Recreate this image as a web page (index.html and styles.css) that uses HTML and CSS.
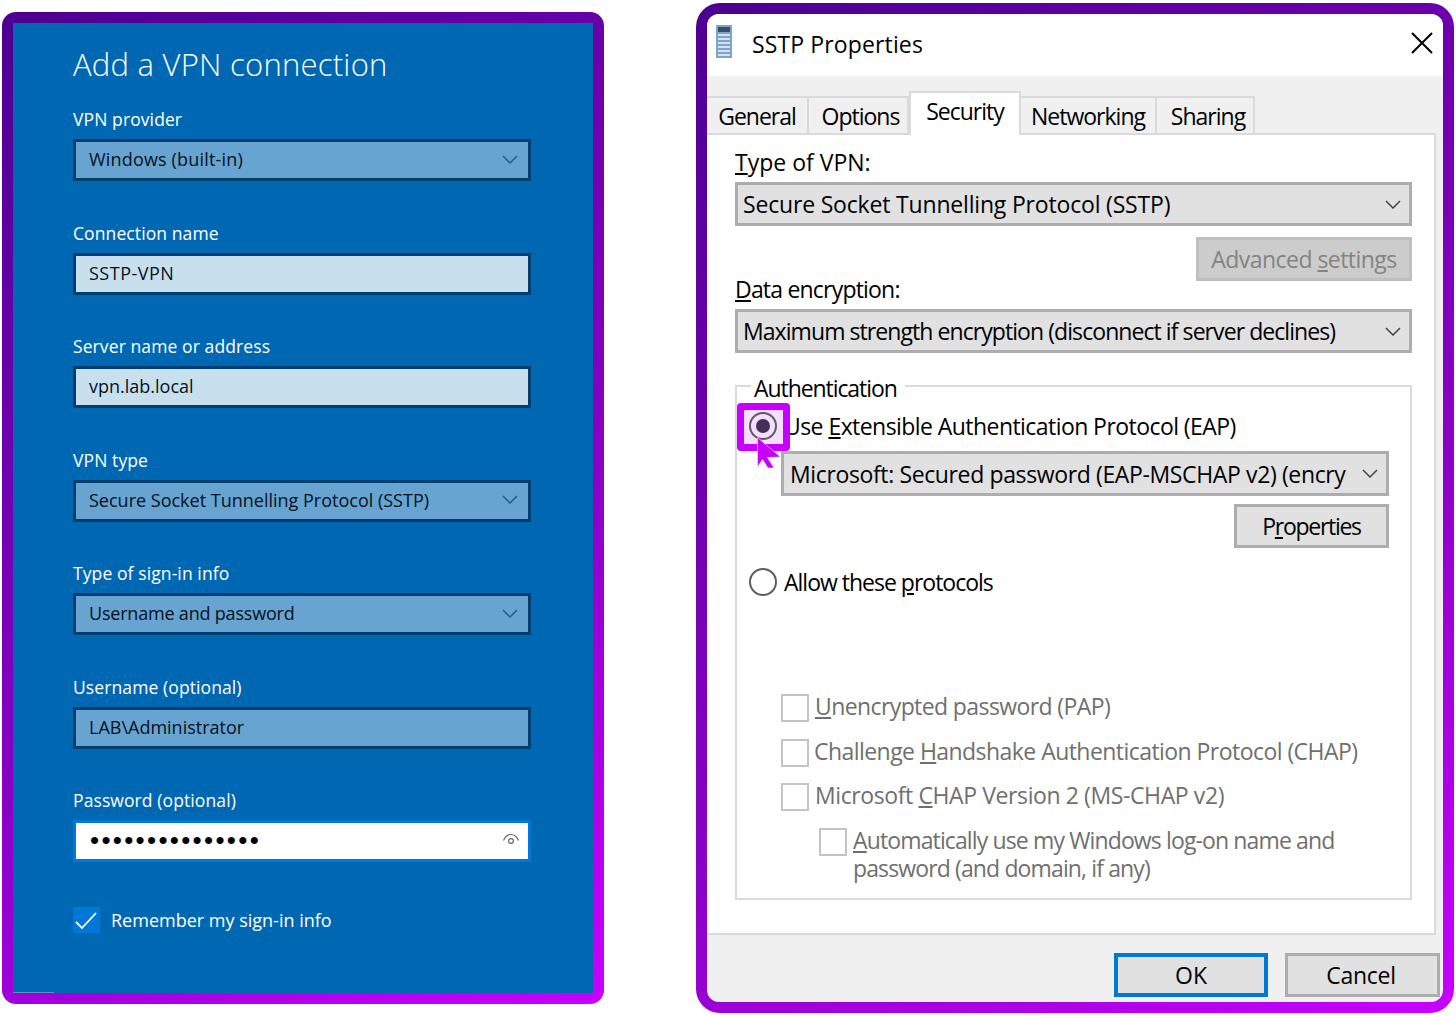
FILE: index.html
```html
<!DOCTYPE html>
<html lang="en">
<head>
<meta charset="utf-8">
<title>VPN connection</title>
<link rel="stylesheet" href="styles.css">
</head>
<body>
<main class="page">
  <section class="frame frame-left">
    <div class="vpn">
      <h1 class="vpn-title">Add a VPN connection</h1>
      <div class="vpn-fields">
        <div class="field">
          <div class="field-label">VPN provider</div>
          <div class="box box-select"><span class="ls-win">Windows (built-in)</span>
            <svg class="chev" viewBox="0 0 16 9"><path d="M1 1l7 7 7-7"/></svg></div>
        </div>
        <div class="field">
          <div class="field-label">Connection name</div>
          <div class="box box-light"><span class="ls-sstp">SSTP-VPN</span></div>
        </div>
        <div class="field">
          <div class="field-label">Server name or address</div>
          <div class="box box-light"><span>vpn.lab.local</span></div>
        </div>
        <div class="field">
          <div class="field-label">VPN type</div>
          <div class="box box-select"><span>Secure Socket Tunnelling Protocol (SSTP)</span>
            <svg class="chev" viewBox="0 0 16 9"><path d="M1 1l7 7 7-7"/></svg></div>
        </div>
        <div class="field">
          <div class="field-label">Type of sign-in info</div>
          <div class="box box-select"><span class="ls-user">Username and password</span>
            <svg class="chev" viewBox="0 0 16 9"><path d="M1 1l7 7 7-7"/></svg></div>
        </div>
        <div class="field">
          <div class="field-label">Username (optional)</div>
          <div class="box box-select"><span>LAB\Administrator</span></div>
        </div>
        <div class="field">
          <div class="field-label">Password (optional)</div>
          <div class="box box-pass"><span class="dots">•••••••••••••••</span>
            <svg class="eye" viewBox="0 0 18 14"><path d="M1.500 7.500C3.500 3 6 1.500 9 1.500s5.500 1.500 7.500 6"/><circle cx="9" cy="8" r="2.400"/></svg></div>
        </div>
      </div>
      <div class="remember">
        <span class="tick"><svg viewBox="0 0 26 26"><path d="M3 15l6 6L23 6"/></svg></span>
        <span>Remember my sign-in info</span>
      </div>
    </div>
  </section>

  <section class="frame frame-right">
    <div class="dialog">
      <header class="titlebar">
        <svg class="server" viewBox="0 0 16 33">
          <rect x="0" y="0" width="16" height="33" fill="#7da3c7"/>
          <rect x="2" y="2" width="12" height="5" fill="#33516e"/>
          <path d="M2 10h12M2 14h12M2 18h12M2 22h12M2 26h12M2 30h12" stroke="#d5e2ee" stroke-width="2"/>
        </svg>
        <span class="title-text">SSTP Properties</span>
        <svg class="close" viewBox="0 0 22 22"><path d="M1 1l20 20M21 1L1 21"/></svg>
      </header>
      <nav class="tabs">
        <div class="tab tab-general">General</div>
        <div class="tab tab-options">Options</div>
        <div class="tab tab-active">Security</div>
        <div class="tab tab-net">Networking</div>
        <div class="tab tab-share">Sharing</div>
      </nav>
      <div class="panel">
        <div class="plabel"><u>T</u>ype of VPN:</div>
        <div class="combo"><span class="ls-vpn">Secure Socket Tunnelling Protocol (SSTP)</span>
          <svg class="chev chev-dark" viewBox="0 0 16 9"><path d="M1 1l7 7 7-7"/></svg></div>
        <div class="adv-row"><div class="btn btn-disabled"><span>Advanced <u>s</u>ettings</span></div></div>
        <div class="plabel plabel-data"><u>D</u>ata encryption:</div>
        <div class="combo"><span class="ls-max">Maximum strength encryption (disconnect if server declines)</span>
          <svg class="chev chev-dark" viewBox="0 0 16 9"><path d="M1 1l7 7 7-7"/></svg></div>
        <fieldset class="group">
          <legend class="group-title">Authentication</legend>
          <div class="radio-row radio-first">
            <span class="radio-wrap">
              <span class="highlight"></span>
              <span class="radio radio-on"></span>
              <svg class="cursor" viewBox="0 0 26 34"><path d="M1.500 1.500L24.500 21 11.500 21.500 18 32 12 32 6.500 23.500 1.500 31z"/></svg>
            </span>
            <span class="radio-text ls-eap">Use <u>E</u>xtensible Authentication Protocol (EAP)</span>
          </div>
          <div class="combo combo-eap"><span class="clip">Microsoft: Secured password (EAP-MSCHAP v2) (encryption enabled)</span>
            <svg class="chev chev-dark" viewBox="0 0 16 9"><path d="M1 1l7 7 7-7"/></svg></div>
          <div class="prop-row"><div class="btn btn-prop"><span>P<u>r</u>operties</span></div></div>
          <div class="radio-row radio-second">
            <span class="radio-wrap"><span class="radio"></span></span>
            <span class="radio-text ls-allow">Allow these <u>p</u>rotocols</span>
          </div>
          <div class="check check-1"><span class="cbox"></span><span class="ctext ls-pap"><u>U</u>nencrypted password (PAP)</span></div>
          <div class="check check-2"><span class="cbox"></span><span class="ctext ls-chap"><span>Challenge <u>H</u>andshake Authentication Protocol (CHAP)</span></span></div>
          <div class="check check-3"><span class="cbox"></span><span class="ctext ls-ms">Microsoft <u>C</u>HAP Version 2 (MS-CHAP v2)</span></div>
          <div class="check check-4"><span class="cbox"></span><span class="ctext ls-auto"><u>A</u>utomatically use my Windows log-on name and<br>password (and domain, if any)</span></div>
        </fieldset>
      </div>
      <footer class="footer">
        <div class="btn btn-ok">OK</div>
        <div class="btn btn-cancel">Cancel</div>
      </footer>
    </div>
  </section>
</main>
</body>
</html>
```

FILE: styles.css
```css
* { box-sizing: border-box; }
html, body { margin: 0; padding: 0; background: #fff; }
body { font-family: "Open Sans", "Noto Sans", sans-serif; }

.page { display: flex; align-items: flex-start; width: 1456px; height: 1016px; overflow: hidden; }

.frame { padding: 11px; background: linear-gradient(150deg, #4d0091 0%, #8a00c6 60%, #c900ff 100%); }
.frame-left { width: 602px; height: 992px; margin: 12px 0 0 2px; border-radius: 14px; }
.frame-right { width: 758px; height: 1010px; margin: 3px 0 0 92px; border-radius: 24px; }

/* left panel */
.vpn { position: relative; height: 100%; padding: 20px 62px 0 60px; background: #0067b3; color: #fff; }
.vpn::after { content: ""; position: absolute; left: 0; bottom: 0; width: 41px; height: 1px; background: #5a8fc0; }
.vpn-title { margin: 0; height: 44px; font-size: 31px; line-height: 42px; font-weight: 300; letter-spacing: 0.25px; white-space: nowrap; }
.vpn-fields { display: grid; row-gap: 42.5px; margin-top: 23px; }
.field { height: 71px; }
.field-label { height: 20px; margin-bottom: 9px; font-size: 17.5px; line-height: 18px; letter-spacing: 0.1px; white-space: nowrap; }
.box { display: flex; align-items: center; justify-content: space-between; height: 42px; padding: 0 10px 2px 13px; border: 3px solid #003e6f; color: #06111c; font-size: 18px; white-space: nowrap; }
.box-select { background: #67a4d1; }
.box-light { background: #c8dfee; }
.box-pass { padding-right: 8px; background: #fff; border-color: #0078d7; }
.ls-win { letter-spacing: 0.17px; }
.ls-sstp { letter-spacing: 0.5px; }
.ls-user { letter-spacing: -0.2px; }
.chev { flex: none; width: 16px; height: 9px; fill: none; stroke: #2b5a85; stroke-width: 1.500; }
.dots { margin-left: 1px; font-family: "Liberation Sans", sans-serif; font-size: 26px; line-height: 30px; letter-spacing: 2.300px; color: #000; }
.eye { width: 18px; height: 14px; fill: none; stroke: #666; stroke-width: 1.200; }
.remember { display: flex; align-items: center; gap: 11px; margin-top: 45px; font-size: 18px; white-space: nowrap; }
.tick { display: block; width: 27px; height: 26px; background: #0078d7; }
.tick svg { display: block; width: 26px; height: 26px; fill: none; stroke: #fff; stroke-width: 1.800; }

/* right dialog */
.dialog { display: flex; flex-direction: column; height: 100%; border-radius: 12px; overflow: hidden; background: #f0f0f0; color: #000; font-size: 23px; }
.titlebar { display: flex; align-items: center; flex: none; height: 62px; padding: 0 10px 0 9px; background: #fff; }
.server { flex: none; width: 16px; height: 33px; margin: 0 20px 8px 0; }
.title-text { margin-bottom: 2px; font-size: 23px; letter-spacing: 0.13px; white-space: nowrap; }
.close { flex: none; width: 22px; height: 22px; margin: 0 0 4px auto; fill: none; stroke: #000; stroke-width: 2; }

.tabs { display: flex; align-items: flex-end; flex: none; height: 57px; }
.tab { display: flex; align-items: center; justify-content: center; height: 37px; border: 2px solid #dadada; border-bottom: 0; border-left: 0; font-size: 23px; letter-spacing: -1px; white-space: nowrap; }
.tab-general { width: 102px; }
.tab-options { width: 100px; padding-left: 5px; }
.tab-active { position: relative; z-index: 1; width: 112px; height: 44px; margin-bottom: -2px; padding-bottom: 6px; background: #fff; border-left: 2px solid #dadada; }
.tab-net { width: 136px; }
.tab-share { width: 98px; padding-left: 6px; }

.panel { flex: 1; margin-right: 7px; padding: 13px 22px 0 28px; background: #fff; border: 2px solid #dadada; border-left: 0; }
.plabel { height: 30px; margin-bottom: 4px; line-height: 28px; white-space: nowrap; }
.plabel-data { margin-top: -6px; letter-spacing: -0.8px; }
.combo { display: flex; align-items: center; justify-content: space-between; height: 44px; padding: 0 8px 0 5px; background: #e1e1e1; border: 3px solid #adadad; white-space: nowrap; }
.ls-vpn { letter-spacing: -0.18px; }
.ls-max { letter-spacing: -0.93px; }
.chev-dark { stroke: #444; stroke-width: 1.500; }
.adv-row, .prop-row { display: flex; justify-content: flex-end; }
.adv-row { margin-top: 11px; }
.btn { display: flex; align-items: center; justify-content: center; height: 44px; border: 3px solid #adadad; background: #e1e1e1; white-space: nowrap; }
.btn-disabled { width: 216px; background: #ccc; border-color: #bfbfbf; color: #838383; letter-spacing: -0.55px; }
.group { display: block; height: 529px; margin: 18px 0 0; padding: 0 21px 0 0; border: 2px solid #dadada; min-width: 0; }
.group-title { height: 30px; margin-left: 14px; padding: 0 8px 0 3px; line-height: 34px; letter-spacing: -1.07px; white-space: nowrap; }
.radio-row { display: flex; align-items: center; height: 36px; padding-left: 12px; white-space: nowrap; }
.radio-first { margin-top: 7px; }
.radio-second { margin-top: 16px; }
.ls-eap { letter-spacing: -0.56px; }
.ls-allow { letter-spacing: -1px; }
.radio-wrap { position: relative; flex: none; width: 28px; height: 28px; margin-right: 7px; }
.radio { position: absolute; inset: 0; z-index: 2; border: 2px solid #5d5d5d; border-radius: 50%; background: #fff; }
.radio-on { background: #f5deff; }
.radio-on::after { content: ""; position: absolute; left: 5px; top: 5px; width: 14px; height: 14px; border-radius: 50%; background: #40305a; }
.highlight { position: absolute; left: -12px; top: -9px; z-index: 1; width: 53px; height: 48px; border: 7px solid #c800ff; border-radius: 4px; background: #f5deff; }
.cursor { position: absolute; left: 7px; top: 24px; z-index: 3; width: 26px; height: 34px; fill: #c800ff; stroke: #fff; stroke-width: 0.500; }
.combo-eap { width: 608px; height: 45px; margin: 7px 0 0 44px; padding-left: 6px; }
.clip { display: block; width: 557px; overflow: hidden; letter-spacing: -0.37px; }
.prop-row { margin-top: 8px; }
.btn-prop { width: 155px; letter-spacing: -1.3px; }
.check { display: flex; align-items: flex-start; gap: 6px; margin-left: 44px; color: #6f6f6f; white-space: nowrap; line-height: 28px; }
.check-1 { margin-top: 94px; }
.check-2 { margin-top: 17px; }
.check-3 { margin-top: 16px; }
.check-4 { margin: 17px 0 0 82px; }
.ctext { margin-top: -2px; }
.ls-pap { letter-spacing: -0.6px; }
.ls-chap { margin-left: -1px; letter-spacing: -0.55px; }
.ls-ms { letter-spacing: -0.4px; }
.ls-auto { letter-spacing: -0.87px; }
.cbox { flex: none; width: 28px; height: 28px; border: 2px solid #c4c4c4; background: #fff; }

.footer { display: flex; justify-content: flex-end; gap: 17px; flex: none; height: 67px; padding: 18px 3px 0 0; }
.btn-ok { width: 154px; border: 4px solid #0078d7; }
.btn-cancel { width: 155px; padding-right: 3px; letter-spacing: -0.3px; }
```
